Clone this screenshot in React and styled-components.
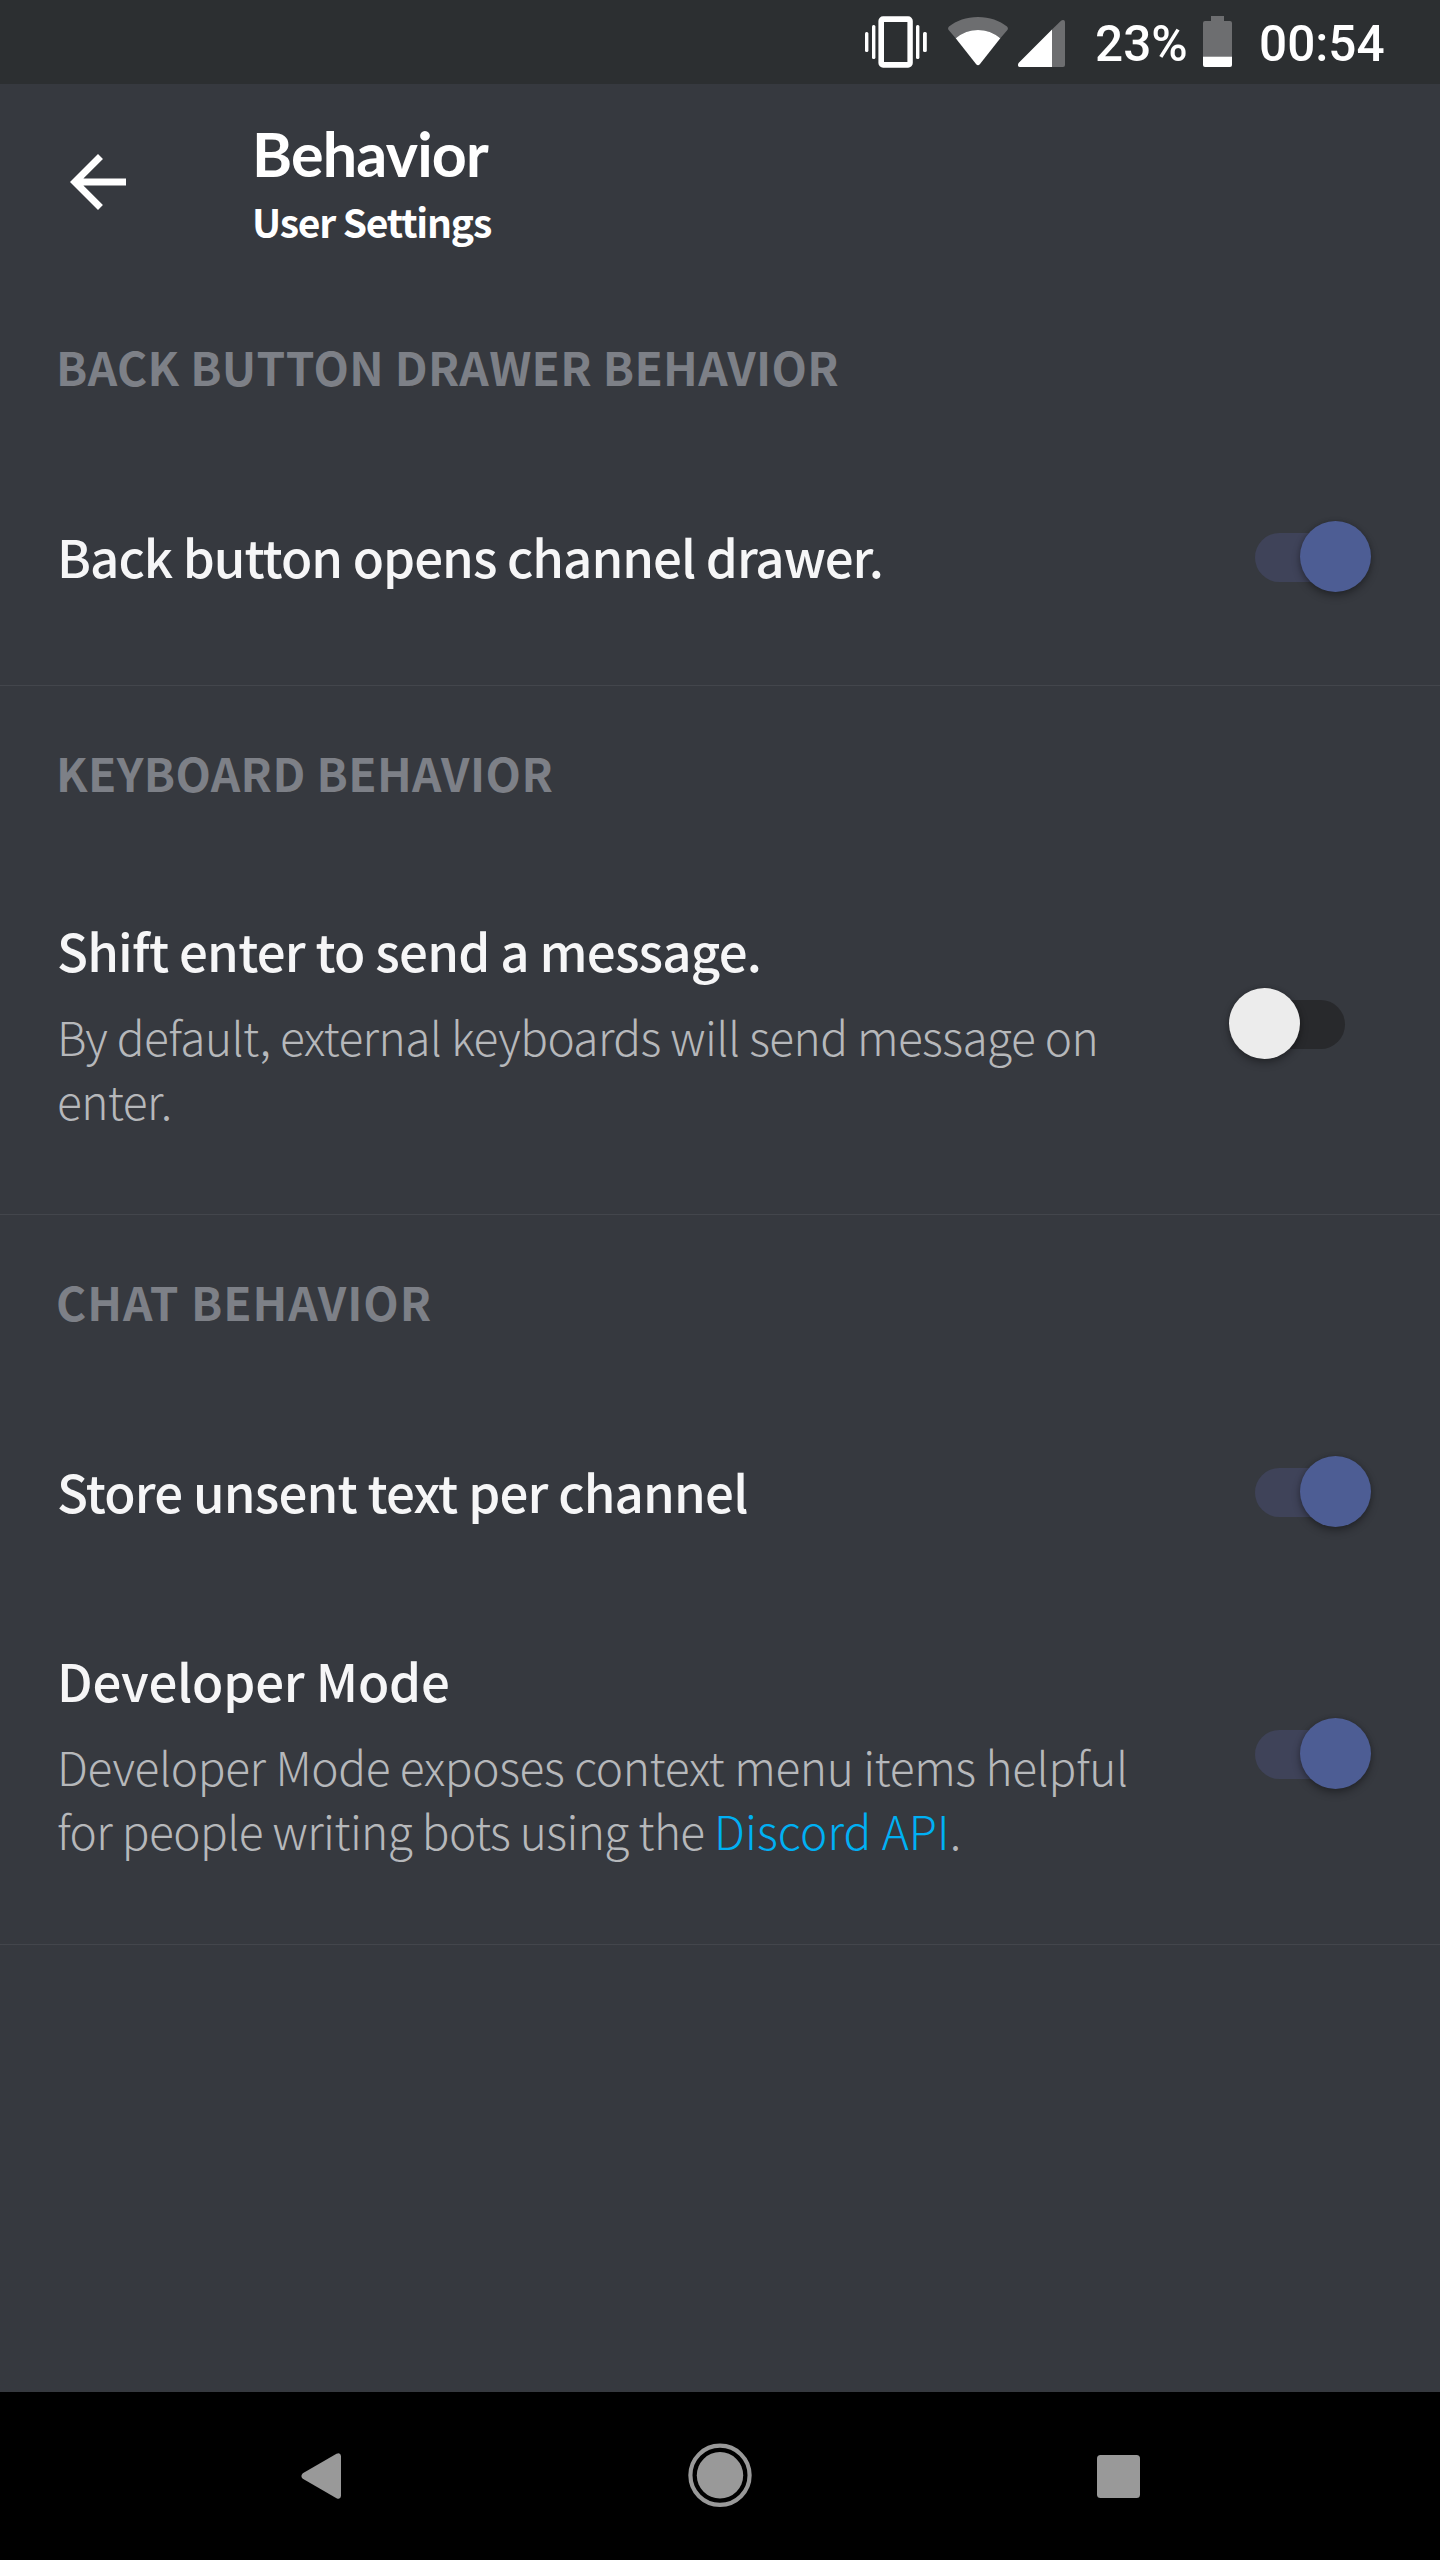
import React from 'react';
import styled, { createGlobalStyle } from 'styled-components';

const GlobalStyle = createGlobalStyle`
  *, *::before, *::after { box-sizing: border-box; }
  body {
    margin: 0;
    background: #36393f;
  }
`;

const uiFont = "'Noto Sans CJK SC', 'Open Sans', sans-serif";

const Screen = styled.div`
  display: flex;
  flex-direction: column;
  width: 1440px;
  height: 2560px;
  overflow: hidden;
  background: #36393f;
  color: #fff;
  font-family: ${uiFont};
`;

/* ---------- status bar ---------- */

const StatusBar = styled.div`
  display: flex;
  justify-content: flex-end;
  flex: none;
  height: 84px;
  padding-right: 55px;
  background: #2c2f31;
`;

const StatusIcon = styled.svg`
  display: block;
  flex: none;
  width: ${p => p.$width}px;
  height: 84px;
  margin-right: ${p => p.$gap}px;
`;

const StatusText = styled.span`
  width: ${p => p.$width}px;
  margin-right: ${p => p.$gap || 0}px;
  font: 500 49.5px/88px Roboto, sans-serif;
  height: 84px;
  white-space: nowrap;
`;

const VibrateIcon = () => (
  <StatusIcon $width={62} $gap={21} viewBox="0 0 62 84" fill="#fff">
    <rect x="0" y="32" width="3.4" height="20" rx="1.5" />
    <rect x="7" y="25" width="3.4" height="34" rx="1.5" />
    <path d="M13.400 21a4.700 4.700 0 0 1 4.700-4.700h25a4.700 4.700 0 0 1 4.700 4.700v42a4.700 4.700 0 0 1-4.700 4.700h-25a4.700 4.700 0 0 1-4.700-4.700zM19 22v40h23.400V22z" fillRule="evenodd" />
    <rect x="51" y="25" width="3.4" height="34" rx="1.5" />
    <rect x="58" y="32" width="3.8" height="20" rx="1.5" />
  </StatusIcon>
);

const WifiIcon = () => (
  <StatusIcon $width={60} $gap={10} viewBox="0 0 60 84">
    <path d="M30 17C18.300 17 8.500 20.600 1 26.500Q-.6 28 .6 30L7.700 38.300Q17.500 30 30 30T52.300 38.300L59.400 30Q60.600 28 59 26.500C51.500 20.600 41.700 17 30 17z" fill="#6d6e70" />
    <path d="M7.700 38.300Q17.500 30 30 30T52.300 38.300L31.800 64.300Q30 66 28.200 64.300z" fill="#fff" />
  </StatusIcon>
);

const SignalIcon = () => (
  <StatusIcon $width={47} $gap={30} viewBox="0 0 47 84">
    <path d="M34 29.500L43 20.700Q44.800 19.300 46.200 20.300Q47 21 47 22.500V65Q47 67 45 67H34z" fill="#6d6e70" />
    <path d="M34 29.500V67H2Q-.2 67 0 64.700Q0 63.700.8 62.800z" fill="#fff" />
  </StatusIcon>
);

const BatteryIcon = () => (
  <StatusIcon $width={29} $gap={27} viewBox="0 0 29 84">
    <path d="M8 16h13v5h6q2 0 2 2v33H0V23q0-2 2-2h6z" fill="#6d6e70" />
    <path d="M0 56.500h29V65q0 2-2 2H2q-2 0-2-2z" fill="#fff" />
  </StatusIcon>
);

/* ---------- toolbar ---------- */

const Toolbar = styled.header`
  display: flex;
  flex: none;
  height: 196px;
  padding-left: 56px;
`;

const BackButton = styled.button`
  display: flex;
  align-items: center;
  width: 84px;
  margin-right: 112px;
  padding: 0;
  border: 0;
  background: none;
`;

const Heading = styled.div`
  display: flex;
  flex-direction: column;
  padding-top: 34px;
`;

const Title = styled.h1`
  margin: 0;
  font: 700 61px/72px Lato, sans-serif;
  letter-spacing: -0.8px;
`;

const Subtitle = styled.p`
  margin: 7px 0 0;
  font: 700 39px/48px ${uiFont};
  font-variant-ligatures: none;
  letter-spacing: -1.2px;
`;

/* ---------- settings ---------- */

const Section = styled.section`
  padding-bottom: 28px;
  border-bottom: 1px solid #43464c;
`;

const SectionTitle = styled.h2`
  height: 176px;
  margin: 0;
  padding: 56px 56px 0;
  color: #7d8087;
  font-size: 46px;
  font-weight: 700;
  line-height: 60px;
  letter-spacing: ${p => p.$tracking}px;
`;

const Row = styled.div`
  display: flex;
  align-items: center;
  min-height: 201px;
  padding: 52px 69px 54px 57px;
`;

const RowText = styled.div`
  flex: 1;
  padding-right: 50px;
`;

const RowTitle = styled.div`
  color: #f6f6f7;
  font-size: 51px;
  font-weight: 500;
  line-height: 72px;
  letter-spacing: ${p => p.$tracking}px;
  white-space: nowrap;
`;

const RowDescription = styled.div`
  margin-top: 18px;
  color: #b6b8bb;
  font-size: 46px;
  font-weight: 300;
  line-height: 64px;
  letter-spacing: ${p => p.$tracking}px;
`;

const Link = styled.a`
  color: #00b0f4;
  letter-spacing: 0.1px;
  text-decoration: none;
`;

const Prose = styled.span`
  letter-spacing: -0.6px;
`;

const Switch = styled.div`
  position: relative;
  display: flex;
  align-items: center;
  justify-content: center;
  flex: none;
  width: 142px;
  height: 71px;
  margin-top: ${p => (p.$compact ? 2 : 1)}px;
`;

const Track = styled.div`
  width: 90px;
  height: 49px;
  margin-top: 1px;
  border-radius: 25px;
  background: ${p => (p.$on ? '#3f4359' : '#28292c')};
`;

const Thumb = styled.div`
  position: absolute;
  top: 0;
  ${p => (p.$on ? 'right' : 'left')}: 0;
  width: 71px;
  height: 71px;
  border-radius: 50%;
  background: ${p => (p.$on ? '#4d5d94' : '#ececec')};
  box-shadow: 0 4px 8px rgba(0, 0, 0, 0.32), 0 0 4px rgba(0, 0, 0, 0.15);
`;

/* ---------- navigation bar ---------- */

const NavBar = styled.nav`
  display: flex;
  justify-content: center;
  flex: none;
  height: 168px;
  margin-top: auto;
  padding-right: 1px;
  background: #000;
`;

const NavButton = styled.div`
  display: flex;
  align-items: center;
  justify-content: center;
  width: 399px;
`;

const sections = [
  {
    title: 'BACK BUTTON DRAWER BEHAVIOR',
    tracking: 0.35,
    rows: [{ title: 'Back button opens channel drawer.', tracking: -0.97, on: true }],
  },
  {
    title: 'KEYBOARD BEHAVIOR',
    tracking: 0.4,
    rows: [
      {
        title: 'Shift enter to send a message.',
        tracking: -0.78,
        description: 'By default, external keyboards will send message on enter.',
        descriptionTracking: -0.59,
        on: false,
      },
    ],
  },
  {
    title: 'CHAT BEHAVIOR',
    tracking: 0.95,
    rows: [
      { title: 'Store unsent text per channel', tracking: -0.82, on: true },
      {
        title: 'Developer Mode',
        tracking: -0.2,
        description: (
          <>
            Developer Mode exposes context menu items helpful{' '}
            <Prose>for people writing bots using the </Prose>
            <Link>Discord API</Link>.
          </>
        ),
        descriptionTracking: -0.38,
        on: true,
      },
    ],
  },
];

function SettingRow({ title, tracking, description, descriptionTracking, on }) {
  return (
    <Row>
      <RowText>
        <RowTitle $tracking={tracking}>{title}</RowTitle>
        {description && <RowDescription $tracking={descriptionTracking}>{description}</RowDescription>}
      </RowText>
      <Switch role="switch" aria-checked={on} $compact={!description}>
        <Track $on={on} />
        <Thumb $on={on} />
      </Switch>
    </Row>
  );
}

export default function App() {
  return (
    <Screen>
      <GlobalStyle />
      <StatusBar>
        <VibrateIcon />
        <WifiIcon />
        <SignalIcon />
        <StatusText $width={93} $gap={15}>23%</StatusText>
        <BatteryIcon />
        <StatusText $width={126}>00:54</StatusText>
      </StatusBar>
      <Toolbar>
        <BackButton>
          <svg width="84" height="84" viewBox="0 0 24 24" fill="#fff">
            <path d="M20 11H7.830l5.590-5.590L12 4l-8 8 8 8 1.410-1.410L7.830 13H20v-2z" />
          </svg>
        </BackButton>
        <Heading>
          <Title>Behavior</Title>
          <Subtitle>User Settings</Subtitle>
        </Heading>
      </Toolbar>
      {sections.map(section => (
        <Section key={section.title}>
          <SectionTitle $tracking={section.tracking}>{section.title}</SectionTitle>
          {section.rows.map(row => (
            <SettingRow key={row.title} {...row} />
          ))}
        </Section>
      ))}
      <NavBar>
        <NavButton>
          <svg width="40" height="46" viewBox="0 0 40 46" fill="#999">
            <path d="M40 3V43Q39.500 47 35.500 45.300L1.800 25.800Q-1 23 1.800 20.200L35.500 .7Q39.500-1 40 3z" />
          </svg>
        </NavButton>
        <NavButton>
          <svg width="66" height="66" viewBox="0 0 66 66">
            <circle cx="33" cy="32.300" r="29.600" fill="none" stroke="#999" strokeWidth="4.200" />
            <circle cx="33" cy="32.300" r="23.200" fill="#999" />
          </svg>
        </NavButton>
        <NavButton>
          <svg width="43" height="43" viewBox="0 0 43 43" fill="#999">
            <rect width="43" height="43" rx="3.500" />
          </svg>
        </NavButton>
      </NavBar>
    </Screen>
  );
}
